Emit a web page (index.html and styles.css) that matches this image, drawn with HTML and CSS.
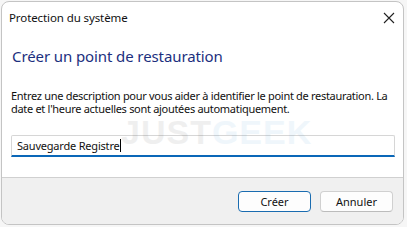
FILE: index.html
```html
<!DOCTYPE html>
<html lang="fr">
<head>
<meta charset="utf-8">
<link rel="stylesheet" href="styles.css">
</head>
<body>
<div class="window">
  <div class="titlebar">
    <span class="title">Protection du système</span>
    <svg class="close" width="12" height="12" viewBox="0 0 12 12"><path d="M1 1L11 11M11 1L1 11" stroke="#222" stroke-width="1.1" fill="none"/></svg>
  </div>
  <div class="content">
    <h1 class="heading">Créer un point de restauration</h1>
    <p class="desc">Entrez une description pour vous aider à identifier le point de restauration. La date et l'heure actuelles sont ajoutées automatiquement.</p>
    <div class="field">
      <span class="value">Sauvegarde Registre</span><span class="caret"></span>
    </div>
    <div class="watermark"><span class="wm-just">JUST</span><span class="wm-geek">GEEK</span></div>
  </div>
  <div class="footer">
    <button class="btn primary">Créer</button>
    <button class="btn">Annuler</button>
  </div>
</div>
</body>
</html>
```
FILE: styles.css
```css
html, body {
  margin: 0;
  padding: 0;
  background: #f6f6f6;
}
body {
  width: 407px;
  height: 227px;
  padding: 1px 0 0 1px;
  box-sizing: border-box;
  font-family: "Noto Sans", "Open Sans", sans-serif;
  color: #1a1a1a;
}
.window {
  box-sizing: border-box;
  width: 403px;
  height: 224px;
  border: 1px solid #c4c4c4;
  border-radius: 8px;
  background: #ffffff;
  display: flex;
  flex-direction: column;
  overflow: hidden;
}
.titlebar {
  display: flex;
  align-items: center;
  justify-content: space-between;
  height: 30px;
  padding: 0 8px 0 7px;
}
.title {
  font-size: 11.5px;
  color: #111;
  letter-spacing: -0.1px;
}
.close {
  display: block;
  margin-top: 2px;
}
.content {
  position: relative;
  flex: 1;
  padding: 0 8px 0 9px;
}
.heading {
  margin: 14px 0 0 1px;
  font-size: 15px;
  font-weight: normal;
  color: #1c2f7e;
  line-height: 20px;
  letter-spacing: -0.1px;
}
.desc {
  margin: 23px 0 0 0;
  font-size: 11px;
  line-height: 13px;
  color: #111;
  letter-spacing: -0.3px;
}
.field {
  margin-top: 20px;
  box-sizing: border-box;
  height: 22px;
  border: 1px solid #d6d6d6;
  border-bottom: 2px solid #0a67b8;
  border-radius: 2px 2px 0 0;
  padding: 0 5px;
  display: flex;
  align-items: center;
  font-size: 11px;
  letter-spacing: -0.2px;
  color: #111;
}
.caret {
  display: inline-block;
  width: 1px;
  height: 13px;
  background: #000;
}
.watermark {
  position: absolute;
  left: 119px;
  top: 83px;
  font-family: "Liberation Sans", sans-serif;
  font-weight: bold;
  font-size: 34px;
  line-height: 1;
  letter-spacing: 1px;
  opacity: 0.07;
  pointer-events: none;
}
.wm-just { color: #333; }
.wm-geek { color: #2a8ad0; }
.footer {
  height: 47px;
  border-top: 1px solid #d0d0d0;
  background: #f0f0f0;
  display: flex;
  justify-content: flex-end;
  align-items: flex-start;
  gap: 9px;
  padding: 13px 10px 0 0;
  box-sizing: border-box;
}
.btn {
  width: 73px;
  height: 21px;
  font-family: "Noto Sans", "Open Sans", sans-serif;
  font-size: 11px;
  color: #111;
  background: #fdfdfd;
  border: 1px solid #d0d0d0;
  border-bottom-color: #bcbcbc;
  border-radius: 4px;
  padding: 0;
}
.btn.primary {
  border: 1px solid #1a6cb0;
}
```
